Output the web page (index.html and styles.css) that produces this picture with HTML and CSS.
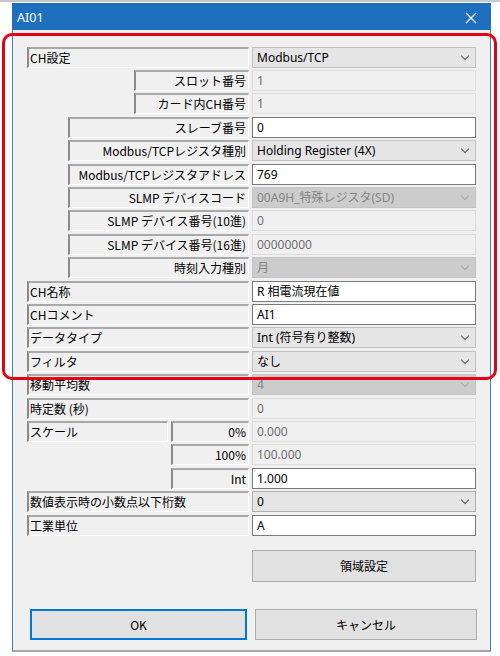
FILE: index.html
```html
<!DOCTYPE html>
<html>
<head>
    <meta charset="UTF-8" />
    <title>AI01</title>
    <link rel="stylesheet" href="styles.css">
</head>
<body>
  <div class="screen">
    <div class="window">
      <div class="titlebar">
        <span class="title">AI01</span>
        <svg class="close" width="12" height="12" viewBox="0 0 12 12"><path d="M1 1 L11 11 M11 1 L1 11" stroke="#fff" stroke-width="1.2" fill="none"/></svg>
      </div>

      <div class="content">
        <div class="rows">
          <div class="row">
            <div class="label">CH設定</div>
            <div class="field select">Modbus/TCP<span class="chev"></span></div>
          </div>
          <div class="row">
            <div class="label right indent2">スロット番号</div>
            <div class="field off">1</div>
          </div>
          <div class="row">
            <div class="label right indent2">カード内CH番号</div>
            <div class="field off">1</div>
          </div>
          <div class="row">
            <div class="label right indent1">スレーブ番号</div>
            <div class="field input">0</div>
          </div>
          <div class="row">
            <div class="label right indent1">Modbus/TCPレジスタ種別</div>
            <div class="field select">Holding Register (4X)<span class="chev"></span></div>
          </div>
          <div class="row">
            <div class="label right indent1">Modbus/TCPレジスタアドレス</div>
            <div class="field input">769</div>
          </div>
          <div class="row">
            <div class="label right indent1">SLMP デバイスコード</div>
            <div class="field select-off">00A9H_特殊レジスタ(SD)<span class="chev"></span></div>
          </div>
          <div class="row">
            <div class="label right indent1">SLMP デバイス番号(10進)</div>
            <div class="field off">0</div>
          </div>
          <div class="row">
            <div class="label right indent1">SLMP デバイス番号(16進)</div>
            <div class="field off">00000000</div>
          </div>
          <div class="row">
            <div class="label right indent1">時刻入力種別</div>
            <div class="field select-off">月<span class="chev"></span></div>
          </div>
          <div class="row">
            <div class="label">CH名称</div>
            <div class="field input">R 相電流現在値</div>
          </div>
          <div class="row">
            <div class="label">CHコメント</div>
            <div class="field input">AI1</div>
          </div>
          <div class="row">
            <div class="label">データタイプ</div>
            <div class="field select">Int (符号有り整数)<span class="chev"></span></div>
          </div>
          <div class="row">
            <div class="label">フィルタ</div>
            <div class="field select">なし<span class="chev"></span></div>
          </div>
          <div class="row">
            <div class="label">移動平均数</div>
            <div class="field select-off">4<span class="chev"></span></div>
          </div>
          <div class="row">
            <div class="label">時定数 (秒)</div>
            <div class="field off">0</div>
          </div>
          <div class="row">
            <div class="split">
              <div class="label">スケール</div>
              <div class="label right">0%</div>
            </div>
            <div class="field off">0.000</div>
          </div>
          <div class="row">
            <div class="split">
              <div></div>
              <div class="label right">100%</div>
            </div>
            <div class="field off">100.000</div>
          </div>
          <div class="row">
            <div class="split">
              <div></div>
              <div class="label right">Int</div>
            </div>
            <div class="field input">1.000</div>
          </div>
          <div class="row">
            <div class="label">数値表示時の小数点以下桁数</div>
            <div class="field select dark">0<span class="chev"></span></div>
          </div>
          <div class="row">
            <div class="label">工業単位</div>
            <div class="field input">A</div>
          </div>
        </div>

        <button class="btn area">領域設定</button>

        <div class="buttons">
          <button class="btn ok">OK</button>
          <button class="btn">キャンセル</button>
        </div>
      </div>
    </div>
    <div class="mark"></div>
  </div>
</body>
</html>
```

FILE: styles.css
```css
/* dialog screenshot */
body {
  margin: 0;
  background: #fff;
  font-family: "Noto Sans", "Noto Sans CJK JP", sans-serif;
  font-size: 12px;
}

.screen {
  position: relative;
  width: 500px;
  height: 656px;
  border-top: 2px solid #c8c8c8;
  box-sizing: border-box;
  padding-top: 1px;
  overflow: hidden;
}

.window {
  margin-left: 12px;
  width: 479px;
}

.titlebar {
  height: 27px;
  background-color: #1f6fbf;
  color: #fff;
  display: flex;
  align-items: center;
  justify-content: space-between;
  padding: 0 14px 0 5px;
}

.title {
  font-size: 12.5px;
  padding-top: 1px;
}

.close {
  margin-top: 2px;
}

.content {
  background-color: #f0f0f0;
  border-left: 1px solid #3a7fc8;
  border-right: 1px solid #3a7fc8;
  border-bottom: 2px solid #a8a8a8;
  height: 622px;
  padding: 16.7px 14px 0 14px;
  box-sizing: border-box;
  display: flex;
  flex-direction: column;
}

.rows {
  display: flex;
  flex-direction: column;
  gap: 2.4px;
}

.row {
  display: grid;
  grid-template-columns: 222px 224px;
  column-gap: 3px;
  height: 21px;
}

.split {
  display: grid;
  grid-template-columns: 141px 78px;
  column-gap: 3px;
}

.label {
  font-family: "Noto Sans CJK JP", sans-serif;
  background-color: #f0f0f0;
  border-style: solid;
  border-width: 2px 1px 1px 2px;
  border-color: #a9a9a9 #fff #fff #8a8a8a;
  color: #000;
  line-height: 18px;
  padding: 0 2px 0 1px;
  white-space: nowrap;
  overflow: hidden;
}

.label.right {
  text-align: right;
}

.indent1 {
  margin-left: 41px;
}

.indent2 {
  margin-left: 107px;
}

.field {
  position: relative;
  border: 1px solid #adadad;
  line-height: 19px;
  padding-left: 4px;
  white-space: nowrap;
  font-family: "Noto Sans", "Noto Sans CJK JP", sans-serif;
}

.field.input {
  background-color: #fff;
  border-color: #7a7a7a;
  color: #000;
}

.field.select {
  background-color: #e5e5e5;
  border-color: #c2c2c2;
  color: #000;
}

.field.select.dark {
  border-color: #adadad;
}

.field.off {
  background-color: #f0f0f0;
  border-color: #dcdcdc;
  color: #6d6d6d;
}

.field.select-off {
  background-color: #cccccc;
  border-color: #c4c4c4;
  color: #858585;
}

.chev {
  position: absolute;
  right: 7px;
  top: 5px;
  width: 5px;
  height: 5px;
  border-right: 1px solid #5a5a5a;
  border-bottom: 1px solid #5a5a5a;
  transform: rotate(45deg);
}

.select-off .chev {
  border-color: #a8a8a8;
}

.btn {
  font-family: "Noto Sans CJK JP", sans-serif;
  font-size: 12px;
  background-color: #e1e1e1;
  border: 1px solid #adadad;
  color: #000;
  padding: 0;
}

.area {
  margin: 14.4px 0 0 225px;
  width: 224px;
  height: 32px;
}

.buttons {
  display: grid;
  grid-template-columns: 217px 222px;
  column-gap: 8px;
  margin: 27px 0 0 3px;
}

.buttons .btn {
  height: 31px;
}

.btn.ok {
  border: 2px solid #0078d7;
}

/* red annotation frame drawn over the dialog */
.mark {
  position: absolute;
  left: 2px;
  top: 31px;
  width: 495px;
  height: 347px;
  box-sizing: border-box;
  border: 3px solid #e60012;
  border-radius: 10px;
  pointer-events: none;
}
```
